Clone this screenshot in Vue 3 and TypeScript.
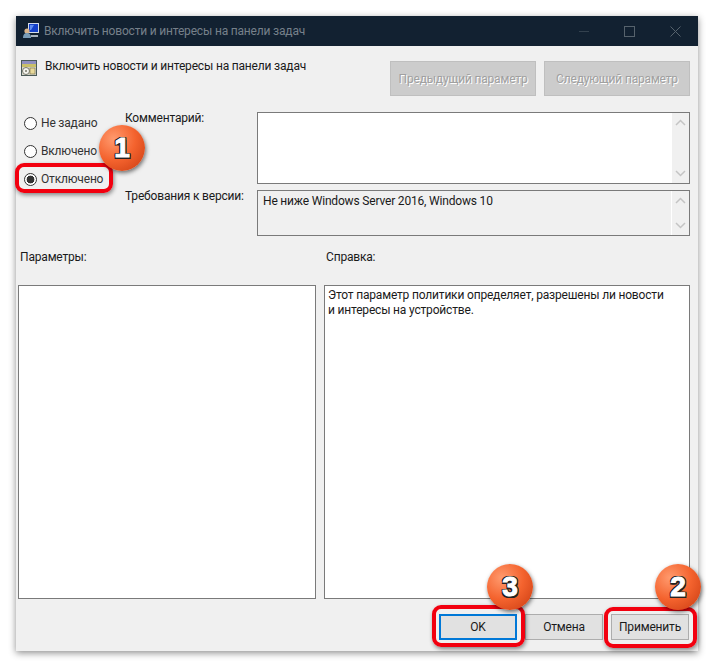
<script setup lang="ts">
const radios = [
  { label: 'Не задано', checked: false },
  { label: 'Включено', checked: false },
  { label: 'Отключено', checked: true },
]
</script>

<template>
  <div class="page">
    <div class="window">
      <div class="titlebar">
        <svg class="app-icon" width="18" height="18" viewBox="0 0 18 18">
          <rect x="6" y="1" width="11" height="10" fill="#d5dce6" />
          <rect x="7" y="2" width="9" height="8" fill="#1440c8" />
          <path d="M8 3h4l-3 5H8z" fill="#5f8cf0" />
          <circle cx="5" cy="9" r="2.6" fill="#d9b48c" />
          <path d="M1 16c0-4 2-5 4-5s4 1 4 5z" fill="#7b9db8" />
          <path d="M9 13h7v2H9z" fill="#aab4bd" />
        </svg>
        <span class="title">Включить новости и интересы на панели задач</span>
        <div class="controls">
          <span class="minimize"></span>
          <span class="maximize"></span>
          <svg width="11" height="11" viewBox="0 0 11 11">
            <path d="M.5.5l10 10M10.500.5l-10 10" stroke="#56626c" fill="none" />
          </svg>
        </div>
      </div>

      <div class="body">
        <div class="header-row">
          <svg class="policy-icon" width="16" height="16" viewBox="0 0 16 16">
            <rect x="0" y="0" width="16" height="16" fill="#4a5a58" />
            <rect x="1" y="1" width="14" height="3" fill="#8f8fc0" />
            <rect x="1" y="4" width="14" height="3" fill="#c9c06a" />
            <rect x="1" y="7" width="14" height="8" fill="#d8d8cc" />
            <circle cx="5" cy="11" r="3.500" fill="#f4f4ee" stroke="#77776a" />
            <circle cx="5" cy="11" r="1" fill="#77776a" />
            <rect x="9" y="8" width="5" height="6" fill="#e8d99a" stroke="#807a50" stroke-width=".7" />
          </svg>
          <span class="policy-name">Включить новости и интересы на панели задач</span>
          <div class="nav-buttons">
            <button class="nav-btn" disabled>Предыдущий параметр</button>
            <button class="nav-btn" disabled>Следующий параметр</button>
          </div>
        </div>

        <div class="settings-row">
          <div class="radios">
            <label v-for="radio in radios" :key="radio.label" class="radio">
              <span class="radio__circle" :class="{ 'radio__circle--on': radio.checked }"></span>
              <span>{{ radio.label }}</span>
            </label>
            <div class="marker marker--radio"></div>
          </div>

          <div class="fields">
            <div class="field field--comment">
              <span class="field__label">Комментарий:</span>
              <div class="field__box">
                <div class="field__text"></div>
                <div class="scroll">
                  <svg width="11" height="7" viewBox="0 0 11 7"><path d="M1 6l4.500-4.500L10 6" stroke="#c4c4c4" stroke-width="1.500" fill="none" /></svg>
                  <svg width="11" height="7" viewBox="0 0 11 7"><path d="M1 1l4.500 4.500L10 1" stroke="#c4c4c4" stroke-width="1.500" fill="none" /></svg>
                </div>
              </div>
            </div>
            <div class="field field--version">
              <span class="field__label">Требования к версии:</span>
              <div class="field__box field__box--readonly">
                <div class="field__text">Не ниже Windows Server 2016, Windows 10</div>
                <div class="scroll scroll--readonly">
                  <svg width="11" height="7" viewBox="0 0 11 7"><path d="M1 6l4.500-4.500L10 6" stroke="#c4c4c4" stroke-width="1.500" fill="none" /></svg>
                  <svg width="11" height="7" viewBox="0 0 11 7"><path d="M1 1l4.500 4.500L10 1" stroke="#c4c4c4" stroke-width="1.500" fill="none" /></svg>
                </div>
              </div>
            </div>
          </div>
        </div>

        <div class="panes">
          <div class="pane pane--left">
            <div class="pane__label">Параметры:</div>
            <div class="pane__box"></div>
          </div>
          <div class="pane pane--right">
            <div class="pane__label">Справка:</div>
            <div class="pane__box">Этот параметр политики определяет, разрешены ли новости и интересы на устройстве.</div>
          </div>
        </div>

        <div class="footer">
          <button class="btn btn--default">OK<span class="marker marker--ok"></span></button>
          <button class="btn">Отмена</button>
          <button class="btn">Применить<span class="marker marker--apply"></span></button>
        </div>
      </div>
    </div>

    <div class="badge badge--one">1</div>
    <div class="badge badge--two">2</div>
    <div class="badge badge--three">3</div>
  </div>
</template>

<style scoped>
.page {
  position: relative;
  width: 714px;
  height: 666px;
  padding: 16px 16px 15px;
  box-sizing: border-box;
  background: #fff;
  font-family: Roboto, "Noto Sans", sans-serif;
  font-size: 12px;
  letter-spacing: -0.18px;
  color: #1a1a1a;
  overflow: hidden;
}

.window {
  height: 635px;
  display: flex;
  flex-direction: column;
  background: #f0f0f0;
  box-shadow: 0 2px 7px rgba(0, 0, 0, 0.45);
}

.titlebar {
  height: 30px;
  flex: none;
  display: flex;
  align-items: center;
  padding-left: 6px;
  background: #122131;
}

.app-icon {
  margin-right: 4px;
}

.title {
  color: #76808a;
}

.controls {
  margin-left: auto;
  display: flex;
  align-items: center;
  gap: 35px;
  padding-right: 17px;
}

.minimize {
  width: 10px;
  height: 1px;
  background: #33414e;
}

.maximize {
  width: 9px;
  height: 9px;
  border: 1px solid #56626c;
}

.body {
  flex: 1;
  display: flex;
  flex-direction: column;
  padding: 14px 8px 11px 2px;
}

.header-row {
  height: 36px;
  display: flex;
  align-items: flex-start;
}

.policy-icon {
  margin: 0 8px 0 3px;
}

.policy-name {
  line-height: 13px;
}

.nav-buttons {
  margin-left: auto;
  margin-top: 1px;
  display: flex;
  gap: 8px;
}

.nav-btn {
  width: 146px;
  height: 35px;
  padding: 0;
  background: #ccc;
  border: 1px solid #bfbfbf;
  font: inherit;
  letter-spacing: inherit;
  color: #a0a0a0;
  text-shadow: 1px 1px 0 #fff;
}

.settings-row {
  display: flex;
  margin-top: 16px;
}

.radios {
  position: relative;
  width: 107px;
  padding: 1px 0 0 6px;
  box-sizing: border-box;
  display: flex;
  flex-direction: column;
  gap: 8px;
}

.radio {
  height: 20px;
  display: flex;
  align-items: center;
  gap: 4px;
  color: #333;
}

.radio__circle {
  width: 13px;
  height: 13px;
  box-sizing: border-box;
  border: 1px solid #333;
  border-radius: 50%;
  background: #fff;
}

.radio__circle--on {
  background: radial-gradient(circle, #333 0 3.600px, #fff 4.200px);
}

.fields {
  flex: 1;
  display: flex;
  flex-direction: column;
  gap: 6px;
}

.field {
  display: flex;
}

.field--comment {
  height: 72px;
}

.field--version {
  height: 46px;
}

.field__label {
  width: 132px;
  flex: none;
  color: #1a1a1a;
  line-height: 12px;
}

.field__box {
  flex: 1;
  display: flex;
  border: 1px solid #7a7a7a;
  background: #fff;
}

.field__box--readonly {
  background: #f0f0f0;
}

.field__text {
  flex: 1;
  padding: 3px 5px;
}

.scroll {
  width: 17px;
  display: flex;
  flex-direction: column;
  justify-content: space-between;
  align-items: center;
  padding: 6px 0;
  background: #f0f0f0;
}

.scroll--readonly {
  width: 18px;
  padding: 6px 0;
  border-left: 1px solid #fff;
  box-sizing: border-box;
}

.panes {
  flex: 1;
  display: flex;
  gap: 8px;
  margin-top: 15px;
}

.pane {
  display: flex;
  flex-direction: column;
}

.pane--left {
  width: 298px;
}

.pane--right {
  width: 366px;
}

.pane__label {
  height: 34px;
  padding-left: 2px;
  line-height: 12px;
}

.pane__box {
  flex: 1;
  border: 1px solid #7a7a7a;
  background: #fff;
  padding: 2px 20px 2px 3px;
  line-height: 15px;
}

.footer {
  height: 26px;
  margin-top: 15px;
  padding-right: 1px;
  display: flex;
  justify-content: flex-end;
  gap: 8px;
}

.btn {
  position: relative;
  width: 78px;
  height: 26px;
  padding: 0;
  background: #e1e1e1;
  border: 1px solid #adadad;
  font: inherit;
  letter-spacing: inherit;
  color: #1a1a1a;
}

.btn--default {
  border: 2px solid #0078d7;
}

.marker {
  position: absolute;
  z-index: 1;
  box-sizing: border-box;
  border: 4px solid #f2000f;
  border-radius: 9px;
  box-shadow: 1px 2px 4px rgba(0, 0, 0, 0.45);
  pointer-events: none;
}

.marker--radio {
  left: -3px;
  top: 51px;
  width: 98px;
  height: 30px;
}

.marker--ok {
  inset: -11px -10px -9px -9px;
}

.marker--apply {
  inset: -8px -9px -9px -8px;
}

.badge {
  position: absolute;
  z-index: 2;
  width: 46px;
  height: 46px;
  display: flex;
  align-items: center;
  justify-content: center;
  border-radius: 50%;
  background: radial-gradient(circle at 32% 30%, #ff9a6e 0, #f4632e 48%, #c83a10 100%);
  box-shadow: 1px 2px 4px rgba(0, 0, 0, 0.55);
  font-family: "Liberation Sans", sans-serif;
  font-size: 28px;
  font-weight: 700;
  letter-spacing: 0;
  color: #fff;
  -webkit-text-stroke: 1px #fff;
  text-shadow: 1.5px 0 0 #222, -1.5px 0 0 #222, 0 1.5px 0 #222, 0 -1.5px 0 #222, 1.5px 1.5px 0 #222, -1.5px 1.5px 0 #222, 1.5px -1.5px 0 #222, -1.5px -1.5px 0 #222;
}

.badge--one {
  left: 99px;
  top: 125px;
}

.badge--two {
  left: 655px;
  top: 564px;
}

.badge--three {
  left: 487px;
  top: 564px;
}
</style>

<style>
html,
body {
  margin: 0;
  background: #fff;
}
</style>
